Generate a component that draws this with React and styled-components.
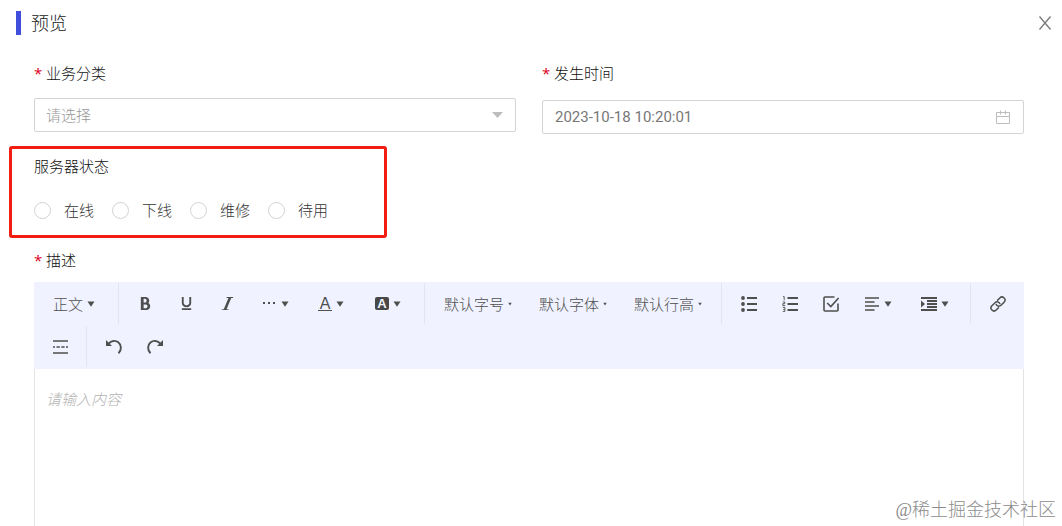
import React, { useState } from 'react';
import styled, { createGlobalStyle } from 'styled-components';
import { ImBold, ImItalic, ImUnderline } from 'react-icons/im';

const GlobalStyle = createGlobalStyle`
  * {
    box-sizing: border-box;
  }

  body {
    margin: 0;
    background: #fff;
  }

  body, button, input, select, textarea {
    font-family: 'Open Sans', 'Noto Sans CJK SC', sans-serif;
    font-size: 15px;
    font-weight: 300;
  }
`;

const Page = styled.div`
  position: relative;
  display: flex;
  flex-direction: column;
  min-height: 100vh;
  overflow: hidden;
`;

const Header = styled.header`
  display: flex;
  align-items: center;
  height: 45px;
  padding: 0 8px 0 16px;
`;

const Title = styled.h1`
  flex: 1;
  margin: 0;
  padding-left: 10px;
  border-left: 5px solid #414ddb;
  font-size: 18px;
  font-weight: 300;
  line-height: 24px;
  color: #222;
`;

const CloseButton = styled.button`
  display: flex;
  padding: 2px;
  border: 0;
  background: none;
  color: #7d7d7d;
  cursor: pointer;
`;

const Form = styled.form`
  display: flex;
  flex: 1;
  flex-direction: column;
  padding: 16px 38px 0 34px;
`;

const Columns = styled.div`
  display: grid;
  grid-template-columns: 1fr 1fr;
  gap: 26px;
  align-items: start;
`;

const Field = styled.div`
  display: flex;
  flex-direction: column;
  gap: ${props => props.$gap}px;
`;

const Label = styled.label`
  align-self: flex-start;
  line-height: 24px;
  color: #111;
`;

const Required = styled.span`
  display: inline-block;
  width: 12px;
  font-weight: 400;
  color: #d9001b;
`;

const Control = styled.div`
  display: flex;
  align-items: center;
  height: 34px;
  padding-right: 12px;
  border: 1px solid #d4d4d4;
  border-radius: 2px;
  color: #bdbdbd;
`;

const Select = styled.select`
  flex: 1;
  min-width: 0;
  height: 32px;
  padding: 0 11px;
  border: 0;
  outline: 0;
  background: none;
  appearance: none;
  color: ${props => (props.value ? '#555' : '#999')};
`;

const DateInput = styled.input`
  flex: 1;
  min-width: 0;
  height: 32px;
  padding: 0 12px;
  border: 0;
  outline: 0;
  background: none;
  font-family: Roboto, sans-serif;
  font-weight: 400;
  color: #777;
`;

const StatusBox = styled.div`
  display: flex;
  flex-direction: column;
  gap: 20px;
  width: 378px;
  max-width: 100%;
  margin: 12px 0 10px -25px;
  padding: 5px 22px 13px;
  border: 3px solid #f01d10;
  border-radius: 3px;
`;

const StatusTitle = styled.div`
  line-height: 24px;
  color: #111;
`;

const RadioRow = styled.div`
  display: flex;
  gap: 18px;
`;

const RadioLabel = styled.label`
  display: flex;
  align-items: center;
  gap: 13px;
  line-height: 24px;
  color: #333;
  cursor: pointer;
`;

const Radio = styled.input`
  width: 17px;
  height: 17px;
  margin: 0;
  border: 1px solid #d2d2d2;
  border-radius: 50%;
  background: #fff;
  appearance: none;

  &:checked {
    border: 5px solid #414ddb;
  }
`;

const Toolbar = styled.div`
  display: flex;
  flex-wrap: wrap;
  margin-top: 10px;
  padding: 1px 0 0 6px;
  background: #f0f3ff;
`;

const Divider = styled.span`
  width: 1px;
  height: 41px;
  margin: 0 6px 0 5px;
  background: #e2e5f0;
`;

const ToolButton = styled.button`
  display: flex;
  align-items: center;
  gap: 4px;
  width: ${props => props.$width || 41}px;
  height: 43px;
  padding: 0 0 2px 13px;
  border: 0;
  background: none;
  color: #4f4f4f;
  white-space: nowrap;
  cursor: pointer;

  svg {
    flex-shrink: 0;
  }
`;

const Editor = styled.textarea`
  flex: 1;
  min-height: 157px;
  padding: 19px 11px;
  border: 1px solid #e4e4e4;
  border-width: 0 1px;
  outline: 0;
  resize: none;
  line-height: 22px;
  color: #444;

  &::placeholder {
    font-style: italic;
    color: #b4b4b4;
  }
`;

const Watermark = styled.div`
  position: absolute;
  right: 6px;
  bottom: 4px;
  font-family: 'Liberation Serif', 'Noto Sans CJK SC', serif;
  font-size: 18px;
  font-weight: 300;
  line-height: 24px;
  color: #8c8c8c;
  pointer-events: none;
`;

const Caret = ({ size = 8 }) => (
  <svg width={size} height={size} viewBox="0 0 8 8" fill="currentColor">
    <path d="M.5 1.5h7L4 6.8z" />
  </svg>
);

const Icon = ({ children }) => (
  <svg width="16" height="16" viewBox="0 0 16 16" fill="none" stroke="currentColor" strokeWidth="1.6">
    {children}
  </svg>
);

const DotsIcon = () => (
  <Icon>
    <path d="M2 7h2M7 7h2M12 7h2" strokeWidth="2" />
  </Icon>
);

const Letter = styled.span`
  width: 14px;
  font-family: 'Liberation Sans', sans-serif;
  font-size: ${props => (props.$filled ? 13 : 16)}px;
  font-weight: ${props => (props.$filled ? 700 : 400)};
  line-height: 13px;
  text-align: center;
  border-radius: ${props => (props.$filled ? 2 : 0)}px;
  border-bottom: ${props => (props.$filled ? 0 : '1px solid')};
  color: ${props => (props.$filled ? '#f0f3ff' : 'inherit')};
  background: ${props => (props.$filled ? '#484848' : 'none')};
`;

const BulletIcon = () => (
  <Icon>
    <path d="M6 2h10M6 8h10M6 14h10" strokeWidth="1.8" />
    <g fill="currentColor" stroke="none">
      <circle cx="2" cy="2" r="1.9" />
      <circle cx="2" cy="8" r="1.9" />
      <circle cx="2" cy="14" r="1.9" />
    </g>
  </Icon>
);

const NumberIcon = () => (
  <Icon>
    <path d="M5.5 2H16M5.5 8H16M5.5 14H16" strokeWidth="1.8" />
    <path d="M1 .6h1.2v3.8M.8 6h2v1.7h-2v1.9h2.4M.8 11.4h2.1v4H.8M1.2 13.4h1.6" strokeWidth=".9" />
  </Icon>
);

const CheckIcon = () => (
  <Icon>
    <path d="M11.5 1H2a1 1 0 0 0-1 1v12a1 1 0 0 0 1 1h12a1 1 0 0 0 1-1V7.5" />
    <path d="M4.2 7l3.6 3.6L15.6 2" />
  </Icon>
);

const AlignIcon = () => (
  <Icon>
    <path d="M1 2h14M1 6h9.5M1 10h14M1 14h9.5" strokeWidth="1.5" />
  </Icon>
);

const IndentIcon = () => (
  <Icon>
    <path d="M0 2h16M6 5h10M6 8h10M6 11h10M0 14h16" strokeWidth="1.8" />
    <path d="M0 4.6L4 8 0 11.4z" fill="currentColor" stroke="none" />
  </Icon>
);

const LinkIcon = () => (
  <Icon>
    <g transform="rotate(-45 8 8)" strokeWidth="1.5">
      <path d="M6.2 11H2.4a3 3 0 0 1 0-6h4.4a3 3 0 0 1 2.6 4.5" />
      <path d="M9.8 5h3.8a3 3 0 0 1 0 6H9.2a3 3 0 0 1-2.6-4.5" />
    </g>
  </Icon>
);

const DividerIcon = () => (
  <Icon>
    <path d="M0 2h15M0 14h15" />
    <path d="M0 8h2M3.5 8h3.3M8.3 8h3.3M13 8h2" />
  </Icon>
);

const UndoIcon = () => (
  <Icon>
    <path d="M2.5 4.6C5.5 1.6 9.5 1.1 12.3 3.3c3.2 2.6 3.6 7.6.2 10.9" strokeWidth="1.9" />
    <path d="M0 1v6h6z" fill="currentColor" stroke="none" />
  </Icon>
);

const RedoIcon = () => (
  <Icon>
    <path d="M13.5 4.6C10.5 1.6 6.5 1.1 3.7 3.3.5 5.9.1 10.9 3.5 14.2" strokeWidth="1.9" />
    <path d="M16 1v6h-6z" fill="currentColor" stroke="none" />
  </Icon>
);

const CalendarIcon = () => (
  <svg width="15" height="15" viewBox="0 0 15 15" fill="none" stroke="currentColor">
    <path d="M.5 2.5h13v11H.5zM.5 6.5h13M4.5.5v4M9.5.5v4" />
  </svg>
);

const tools = [
  { label: '正文', text: true, width: 73, caret: 8 },
  null,
  { label: '粗体', icon: <ImBold size={15} /> },
  { label: '下划线', icon: <ImUnderline size={15} /> },
  { label: '斜体', icon: <ImItalic size={15} /> },
  { label: '更多', icon: <DotsIcon />, width: 57, caret: 8 },
  { label: '文字颜色', icon: <Letter>A</Letter>, width: 57, caret: 8 },
  { label: '背景色', icon: <Letter $filled>A</Letter>, width: 57, caret: 8 },
  null,
  { label: '默认字号', text: true, width: 95, caret: 4 },
  { label: '默认字体', text: true, width: 95, caret: 4 },
  { label: '默认行高', text: true, width: 95, caret: 4 },
  null,
  { label: '无序列表', icon: <BulletIcon /> },
  { label: '有序列表', icon: <NumberIcon /> },
  { label: '待办', icon: <CheckIcon /> },
  { label: '对齐', icon: <AlignIcon />, width: 57, caret: 8 },
  { label: '缩进', icon: <IndentIcon />, width: 57, caret: 8 },
  null,
  { label: '链接', icon: <LinkIcon /> },
  { label: '分割线', icon: <DividerIcon /> },
  null,
  { label: '撤销', icon: <UndoIcon /> },
  { label: '重做', icon: <RedoIcon /> }
];

const statusList = ['在线', '下线', '维修', '待用'];

const App = () => {
  const [category, setCategory] = useState('');
  const [time, setTime] = useState('2023-10-18 10:20:01');
  const [status, setStatus] = useState(null);

  return (
    <Page>
      <GlobalStyle />
      <Header>
        <Title>预览</Title>
        <CloseButton type="button" aria-label="关闭">
          <svg width="14" height="14" viewBox="0 0 14 14" fill="none" stroke="currentColor" strokeWidth="1.4">
            <path d="M1.5.5l11 13M12.5.5l-11 13" />
          </svg>
        </CloseButton>
      </Header>
      <Form>
        <Columns>
          <Field $gap={13}>
            <Label htmlFor="category"><Required>*</Required>业务分类</Label>
            <Control>
              <Select id="category" value={category} onChange={e => setCategory(e.target.value)}>
                <option value="">请选择</option>
              </Select>
              <svg width="11" height="6" viewBox="0 0 11 6" fill="currentColor">
                <path d="M0 0h11L5.5 6z" />
              </svg>
            </Control>
          </Field>
          <Field $gap={15}>
            <Label htmlFor="time"><Required>*</Required>发生时间</Label>
            <Control>
              <DateInput id="time" type="text" value={time} onChange={e => setTime(e.target.value)} />
              <CalendarIcon />
            </Control>
          </Field>
        </Columns>
        <StatusBox role="radiogroup" aria-labelledby="status-title">
          <StatusTitle id="status-title">服务器状态</StatusTitle>
          <RadioRow>
            {statusList.map(item => (
              <RadioLabel key={item}>
                <Radio type="radio" name="status" checked={status === item} onChange={() => setStatus(item)} />
                {item}
              </RadioLabel>
            ))}
          </RadioRow>
        </StatusBox>
        <Label htmlFor="description"><Required>*</Required>描述</Label>
        <Toolbar role="toolbar">
          {tools.map((tool, index) => (
            tool ? (
              <ToolButton key={tool.label} type="button" aria-label={tool.label} $width={tool.width}>
                {tool.text ? tool.label : tool.icon}
                {tool.caret && <Caret size={tool.caret} />}
              </ToolButton>
            ) : <Divider key={index} />
          ))}
        </Toolbar>
        <Editor id="description" placeholder="请输入内容" />
      </Form>
      <Watermark>@稀土掘金技术社区</Watermark>
    </Page>
  );
};

export default App;
